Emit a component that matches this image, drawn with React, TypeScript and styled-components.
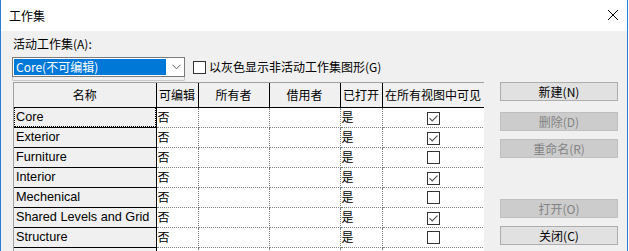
import React from "react";
import styled, { createGlobalStyle } from "styled-components";

const Global = createGlobalStyle`
  html, body { margin: 0; padding: 0; background: #ffffff; overflow: hidden; }
  * { box-sizing: border-box; }
`;

const CJK = `"Noto Sans CJK SC", "Noto Sans", sans-serif`;
const LATIN = `"Liberation Sans", "Noto Sans CJK SC", sans-serif`;

const Window = styled.div`
  width: 628px;
  height: 251px;
  border-left: 1px solid #2b7fd6;
  border-right: 1px solid #2b7fd6;
  display: flex;
  flex-direction: column;
  overflow: hidden;
  font-family: ${CJK};
  font-size: 12px;
  color: #000;
`;

const TitleBar = styled.div`
  height: 31px;
  flex: none;
  background: #ffffff;
  display: flex;
  align-items: center;
  justify-content: space-between;
  padding: 0 8px 0 8px;
`;

const Title = styled.span`
  font-size: 12px;
  line-height: 14px;
`;

const CloseIcon = styled.svg`
  width: 12px;
  height: 12px;
  margin-top: -1px;
`;

const Body = styled.div`
  flex: 1;
  background: #f0f0f0;
  padding: 6px 0 0 11px;
  display: flex;
  flex-direction: column;
  min-height: 0;
`;

const Label = styled.div`
  line-height: 14px;
  height: 14px;
  margin-left: 1px;
`;

const ComboRow = styled.div`
  display: flex;
  align-items: center;
  gap: 8px;
  margin-top: 6px;
  height: 20px;
`;

const Combo = styled.div`
  width: 173px;
  height: 20px;
  border: 1px solid #7a7a7a;
  background: #ffffff;
  display: flex;
  align-items: center;
  padding: 0 1px;
  box-shadow: 0 4px 0 -1px #f0f0f0, 0 4px 0 -0.5px #a0a0a0;
`;

const ComboValue = styled.div`
  width: 152px;
  height: 16px;
  background: #0078d7;
  color: #ffffff;
  font-size: 12px;
  line-height: 16px;
  padding-left: 2px;
  white-space: nowrap;
`;

const Chevron = styled.svg`
  width: 9px;
  height: 6px;
  margin-left: 6px;
`;

const CheckLabel = styled.label`
  display: flex;
  align-items: center;
  gap: 3px;
  line-height: 14px;
`;

const Box = styled.span`
  width: 13px;
  height: 13px;
  border: 1px solid #333333;
  background: #ffffff;
  display: inline-flex;
  align-items: center;
  justify-content: center;
  flex: none;
`;

const Main = styled.div`
  display: flex;
  margin-top: 5px;
  flex: 1;
  min-height: 0;
`;

const TableWrap = styled.div`
  margin-left: 1px;
  width: 471px;
  overflow: hidden;
  border-top: 1px solid #a0a0a0;
  border-left: 1px solid #a0a0a0;
  background: #ffffff;
  flex: none;
`;

const Table = styled.table`
  border-collapse: collapse;
  table-layout: fixed;
  width: 470px;
`;

const Th = styled.th<{ $w: number }>`
  width: ${(p) => p.$w}px;
  height: 24px;
  background: #f0f0f0;
  border-right: 1px solid #000;
  border-bottom: 1px solid #000;
  font-weight: normal;
  font-size: 12px;
  padding: 0;
  text-align: center;
  white-space: nowrap;
  overflow: hidden;
`;

const NameCell = styled.td<{ $focus?: boolean }>`
  height: 20px;
  background: #f0f0f0;
  border-right: 1px solid #000;
  border-bottom: 1px solid #000;
  font-family: ${LATIN};
  font-size: 12.7px;
  padding: 0 0 0 2px;
  white-space: nowrap;
  overflow: hidden;
  outline: ${(p) => (p.$focus ? "1px dotted #000" : "none")};
  outline-offset: -1px;
`;

const Cell = styled.td<{ $center?: boolean }>`
  height: 20px;
  background: #ffffff;
  border-right: 1px dotted #808080;
  border-bottom: 1px dotted #808080;
  padding: 0 0 0 1px;
  text-align: ${(p) => (p.$center ? "center" : "left")};
  font-size: 12px;
  line-height: 14px;
  vertical-align: middle;
`;

const CellBox = styled(Box)`
  margin-top: 2px;
`;

const Buttons = styled.div`
  margin-left: 16px;
  width: 118px;
  display: flex;
  flex-direction: column;
`;

const Button = styled.button<{ $mt: number }>`
  margin-top: ${(p) => p.$mt}px;
  height: 19px;
  width: 118px;
  border: 1px solid ${(p) => (p.disabled ? "#bfbfbf" : "#adadad")};
  background: ${(p) => (p.disabled ? "#cccccc" : "#e1e1e1")};
  color: ${(p) => (p.disabled ? "#838383" : "#000000")};
  font-family: ${CJK};
  font-size: 12px;
  line-height: 15px;
  padding: 0;
  text-align: center;
`;

const Check = () => (
  <svg width="9" height="7" viewBox="0 0 9 7">
    <path d="M0.5 3.2 L3.2 5.9 L8.5 0.6" fill="none" stroke="#555" strokeWidth="1.2" />
  </svg>
);

const rows: { name: string; visible: boolean }[] = [
  { name: "Core", visible: true },
  { name: "Exterior", visible: true },
  { name: "Furniture", visible: false },
  { name: "Interior", visible: true },
  { name: "Mechenical", visible: false },
  { name: "Shared Levels and Grid", visible: true },
  { name: "Structure", visible: false },
];

const cols = [
  { label: "名称", w: 142 },
  { label: "可编辑", w: 42 },
  { label: "所有者", w: 71 },
  { label: "借用者", w: 71 },
  { label: "已打开", w: 42 },
  { label: "在所有视图中可见", w: 102 },
];

const buttons = [
  { label: "新建(N)", mt: 0, disabled: false },
  { label: "删除(D)", mt: 11, disabled: true },
  { label: "重命名(R)", mt: 8, disabled: true },
  { label: "打开(O)", mt: 41, disabled: true },
  { label: "关闭(C)", mt: 8, disabled: false },
];

export default function App() {
  return (
    <>
      <Global />
      <Window>
        <TitleBar>
          <Title>工作集</Title>
          <CloseIcon viewBox="0 0 12 12">
            <path d="M1 1 L11 11 M11 1 L1 11" stroke="#000" strokeWidth="1" fill="none" />
          </CloseIcon>
        </TitleBar>
        <Body>
          <Label>活动工作集(A):</Label>
          <ComboRow>
            <Combo>
              <ComboValue>Core(不可编辑)</ComboValue>
              <Chevron viewBox="0 0 9 6">
                <path d="M0.5 0.8 L4.5 4.8 L8.5 0.8" fill="none" stroke="#555" strokeWidth="1" />
              </Chevron>
            </Combo>
            <CheckLabel>
              <Box />
              以灰色显示非活动工作集图形(G)
            </CheckLabel>
          </ComboRow>
          <Main>
            <TableWrap>
              <Table>
                <thead>
                  <tr>
                    {cols.map((c) => (
                      <Th key={c.label} $w={c.w}>
                        {c.label}
                      </Th>
                    ))}
                  </tr>
                </thead>
                <tbody>
                  {rows.map((r, i) => (
                    <tr key={r.name}>
                      <NameCell $focus={i === 0}>{r.name}</NameCell>
                      <Cell>否</Cell>
                      <Cell />
                      <Cell />
                      <Cell>是</Cell>
                      <Cell $center>
                        <CellBox>{r.visible ? <Check /> : null}</CellBox>
                      </Cell>
                    </tr>
                  ))}
                  <tr>
                    <NameCell />
                    <Cell />
                    <Cell />
                    <Cell />
                    <Cell />
                    <Cell />
                  </tr>
                </tbody>
              </Table>
            </TableWrap>
            <Buttons>
              {buttons.map((b) => (
                <Button key={b.label} $mt={b.mt} disabled={b.disabled}>
                  {b.label}
                </Button>
              ))}
            </Buttons>
          </Main>
        </Body>
      </Window>
    </>
  );
}
